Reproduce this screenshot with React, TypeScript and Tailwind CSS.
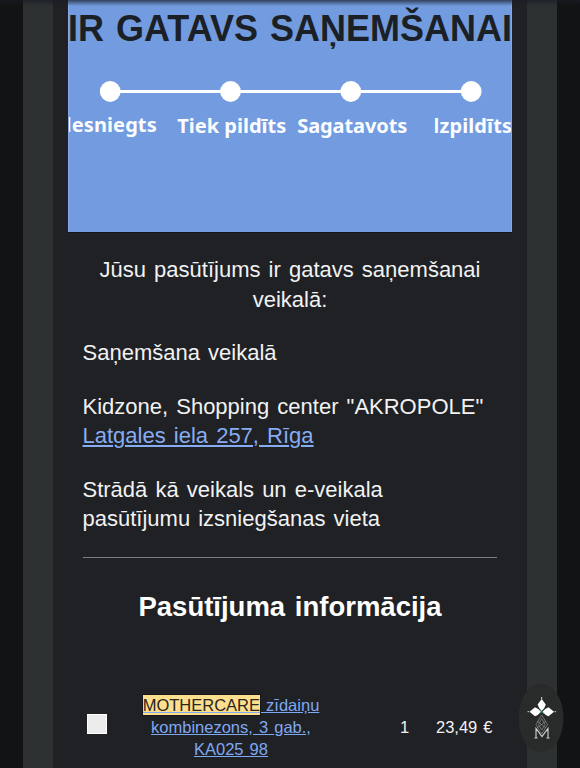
const STEPS = ['Iesniegts', 'Tiek pildīts', 'Sagatavots', 'Izpildīts'];
const STEP_TEXT = [
  "-mt-[2px] tracking-[0.1px] first-letter:font-['Lato']",
  '',
  'tracking-[-0.1px]',
  "-mt-px tracking-[0.1px] first-letter:font-['Lato']",
];

function StatusBanner() {
  return (
    <div className="h-[232px] overflow-hidden bg-[#739bdf] border-x border-[#86a9e5] shadow-[0_1px_0_#11151c]">
      <h1 className="h-[57px] pt-[7px] -mx-2 text-center whitespace-nowrap text-[36px] leading-[44px] font-bold text-[#1b1f26] [word-spacing:2px]">
        IR GATAVS SAŅEMŠANAI
      </h1>
      <svg className="block -mx-px mt-[23px]" width="444" height="24" viewBox="68 80 444 24">
        <path d="M110 91.5H471" stroke="#fff" strokeWidth="3" />
        {[110.2, 230.5, 350.8, 471.2].map((x) => (
          <circle key={x} cx={x} cy="91.5" r="10.4" fill="#fff" />
        ))}
      </svg>
      <div className="-ml-[18px] mt-[8px] grid w-[482px] grid-cols-4 font-['Noto_Sans'] text-[20px] leading-[28px] font-bold text-[#fbfdff]">
        {STEPS.map((step, i) => (
          <div key={step} className="flex justify-center whitespace-nowrap">
            <span className={STEP_TEXT[i]}>{step}</span>
          </div>
        ))}
      </div>
    </div>
  );
}

function StoreInfo() {
  return (
    <div className="mx-[15px] mt-[23px] pb-[23px] border-b border-[#7c7e81] text-[22px] leading-[29.5px] text-[#f1f2f3] [word-spacing:2px]">
      <p className="text-center whitespace-nowrap">
        Jūsu pasūtījums ir gatavs saņemšanai
        <br />
        veikalā:
      </p>
      <p className="-ml-[0.5px] mt-6">Saņemšana veikalā</p>
      <p className="-ml-[0.5px] mt-6 whitespace-nowrap">
        Kidzone, Shopping center "AKROPOLE"
        <br />
        <a href="#" className="text-[#86adf3] underline">Latgales iela 257, Rīga</a>
      </p>
      <p className="-ml-[0.5px] mt-6">
        Strādā kā veikals un e-veikala
        <br />
        pasūtījumu izsniegšanas vieta
      </p>
    </div>
  );
}

function OrderRow() {
  return (
    <div className="mt-[69px] flex items-center px-[19px] text-[16.5px] leading-[22px] text-[#f1f2f3] [word-spacing:1.5px]">
      <div className="h-5 w-5 mt-[-5px] shrink-0 bg-[#ececed] border border-white" />
      <a href="#" className="ml-[23px] w-[202px] shrink-0 text-center text-[#7fa8f3] underline whitespace-nowrap">
        <span className="bg-[#fedf8e] py-px text-[#292620] decoration-[#5578b8] outline outline-[#14151a]">MOTHERCARE</span> zīdaiņu
        <br />
        kombinezons, 3 gab.,
        <br />
        KA025 98
      </a>
      <span className="ml-[68px] w-[36px] shrink-0">1</span>
      <span className="whitespace-nowrap">23,49 €</span>
    </div>
  );
}

function FloatingLogo() {
  return (
    <svg className="fixed left-[518px] top-[683px]" width="46" height="70" viewBox="0 0 46 70">
      <ellipse cx="23" cy="35" rx="22.5" ry="34.5" fill="#292a2a" />
      <path d="M23.7 32L29.500 41.500L23.700 51L18 41.500ZM23.700 35.500L20.500 41.500L23.700 47L27 41.500ZM19 38L28 45M28 38L19 45" fill="none" stroke="#8e8f8f" strokeWidth=".7" />
      <path
        d="M23.7 16L27.800 21.500Q27 25 23.700 28Q20.500 25 19.600 21.500ZM24.500 28.700Q27 25.500 30.500 24.200L36 28.700L30.500 33.200Q27 32 24.500 28.700ZM23 28.700Q20.500 25.500 17 24.200L11.500 28.700L17 33.200Q20.500 32 23 28.700Z"
        fill="#fff"
      />
      <path d="M9.500 28.700H11M36.500 28.700H38M23.700 14V16" stroke="#ddd" />
      <path d="M21.500 26.500L26 31M26 26.500L21.500 31" stroke="#37785b" />
      <path d="M18 55V45.500L24 53.500L30 45.500V55M16.500 55H19.500M28.500 55H31.500" fill="none" stroke="#d4d4d4" strokeWidth="1.1" />
    </svg>
  );
}

export default function App() {
  return (
    <div className="h-[768px] overflow-hidden bg-[#121314] px-[23px] font-['Liberation_Sans',Arial,sans-serif]">
      <div className="h-full bg-[#2d3132] px-[30px]">
        <div className="h-full overflow-hidden bg-[#202124] px-[15px]">
          <StatusBanner />
          <StoreInfo />
          <h2 className="mt-[31px] text-center text-[27.5px] leading-9 font-bold text-white [word-spacing:2px]">Pasūtījuma informācija</h2>
          <OrderRow />
        </div>
      </div>
      <div className="fixed inset-x-0 top-0 h-[6px] bg-linear-to-b from-[#191d25]/70 to-transparent" />
      <FloatingLogo />
    </div>
  );
}
